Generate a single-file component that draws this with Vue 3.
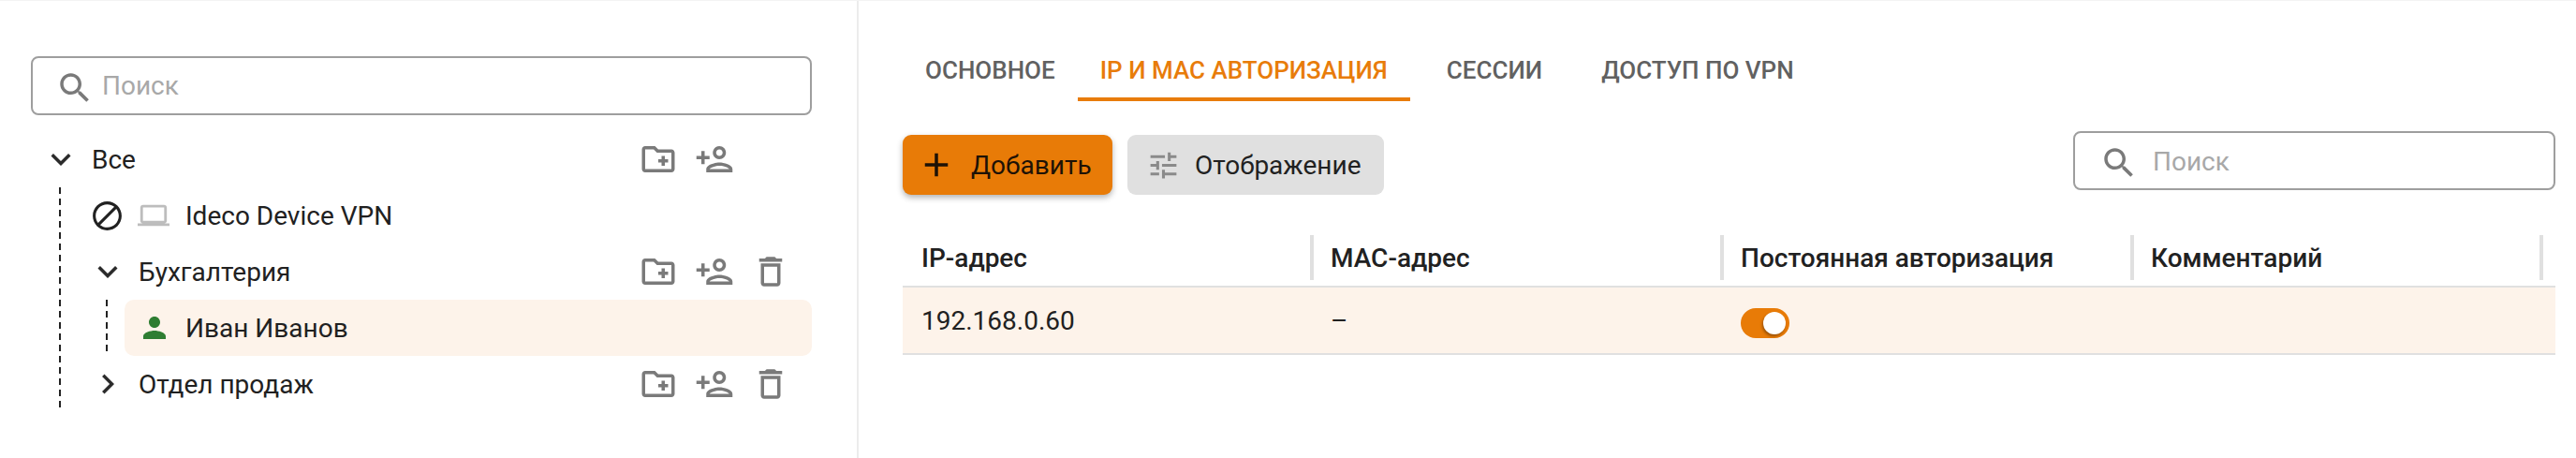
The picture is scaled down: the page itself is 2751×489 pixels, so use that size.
<script setup>
import { ref } from 'vue'

const icons = {
  search: 'M15.5 14h-.79l-.28-.27C15.41 12.59 16 11.11 16 9.5 16 5.91 13.09 3 9.5 3S3 5.91 3 9.5 5.91 16 9.5 16c1.61 0 3.09-.59 4.23-1.57l.27.28v.79l5 4.99L20.49 19l-4.99-5zm-6 0C7.01 14 5 11.99 5 9.5S7.01 5 9.5 5 14 7.01 14 9.5 11.99 14 9.5 14z',
  down: 'M16.59 8.59 12 13.17 7.41 8.59 6 10l6 6 6-6z',
  right: 'M10 6 8.59 7.41 13.17 12l-4.58 4.59L10 18l6-6z',
  folder: 'M20 6h-8l-2-2H4c-1.11 0-1.99.89-1.99 2L2 18c0 1.11.89 2 2 2h16c1.11 0 2-.89 2-2V8c0-1.11-.89-2-2-2zm0 12H4V6h5.17l2 2H20v10zm-8-4h2v2h2v-2h2v-2h-2v-2h-2v2h-2z',
  userAdd: 'M15 12c2.21 0 4-1.79 4-4s-1.79-4-4-4-4 1.79-4 4 1.79 4 4 4zm0-6c1.1 0 2 .9 2 2s-.9 2-2 2-2-.9-2-2 .9-2 2-2zm0 8c-2.67 0-8 1.34-8 4v2h16v-2c0-2.66-5.33-4-8-4zm-6 4c.22-.72 3.31-2 6-2 2.7 0 5.8 1.29 6 2H9zm-3-3v-3h3v-2H6V7H4v3H1v2h3v3z',
  trash: 'M16 9v10H8V9h8m-1.5-6h-5l-1 1H5v2h14V4h-3.5l-1-1zM18 7H6v12c0 1.1.9 2 2 2h8c1.1 0 2-.9 2-2V7z',
  block: 'M12 2C6.48 2 2 6.48 2 12s4.48 10 10 10 10-4.48 10-10S17.52 2 12 2zM4 12c0-4.42 3.58-8 8-8 1.85 0 3.55.63 4.9 1.69L5.69 16.9C4.63 15.55 4 13.85 4 12zm8 8c-1.85 0-3.55-.63-4.9-1.69L18.31 7.1C19.37 8.45 20 10.15 20 12c0 4.42-3.58 8-8 8z',
  laptop: 'M20 18c1.1 0 1.99-.9 1.99-2L22 6c0-1.1-.9-2-2-2H4c-1.1 0-2 .9-2 2v10c0 1.1.9 2 2 2H0v2h24v-2h-4zM4 6h16v10H4V6z',
  person: 'M12 12c2.21 0 4-1.79 4-4s-1.79-4-4-4-4 1.79-4 4 1.79 4 4 4zm0 2c-2.67 0-8 1.34-8 4v2h16v-2c0-2.66-5.33-4-8-4z',
  plus: 'M19 13h-6v6h-2v-6H5v-2h6V5h2v6h6v2z',
  tune: 'M3 17v2h6v-2H3zM3 5v2h10V5H3zm10 16v-2h8v-2h-8v-2h-2v6h2zM7 9v2H3v2h4v2h2V9H7zm14 4v-2H11v2h10zm-6-4h2V7h4V5h-4V3h-2v6z',
}

const tabs = [
  { label: 'Основное', cls: '' },
  { label: 'IP и MAC авторизация', cls: 'active' },
  { label: 'Сессии', cls: 'spaced' },
  { label: 'Доступ по VPN', cls: 'spaced' },
]

const columns = ['IP-адрес', 'MAC-адрес', 'Постоянная авторизация', 'Комментарий']
const permanent = ref(true)
</script>

<template>
  <div class="page">
    <aside class="sidebar">
      <label class="search">
        <svg class="ico search-ico" viewBox="0 0 24 24"><path :d="icons.search" /></svg>
        <span class="placeholder">Поиск</span>
      </label>

      <div class="tree">
        <div class="row">
          <svg class="ico chevron" viewBox="0 0 24 24"><path :d="icons.down" /></svg>
          <span>Все</span>
          <div class="actions">
            <svg class="ico" viewBox="0 0 24 24"><path :d="icons.folder" /></svg>
            <svg class="ico" viewBox="0 0 24 24"><path :d="icons.userAdd" /></svg>
            <span class="ico"></span>
          </div>
        </div>

        <div class="children outer">
          <div class="row level">
            <svg class="ico-block" viewBox="0 0 24 24"><path :d="icons.block" /></svg>
            <svg class="ico-laptop" viewBox="0 0 24 24"><path :d="icons.laptop" /></svg>
            <span>Ideco Device VPN</span>
          </div>

          <div class="row level">
            <svg class="ico chevron" viewBox="0 0 24 24"><path :d="icons.down" /></svg>
            <span>Бухгалтерия</span>
            <div class="actions">
              <svg class="ico" viewBox="0 0 24 24"><path :d="icons.folder" /></svg>
              <svg class="ico" viewBox="0 0 24 24"><path :d="icons.userAdd" /></svg>
              <svg class="ico" viewBox="0 0 24 24"><path :d="icons.trash" /></svg>
            </div>
          </div>

          <div class="children inner">
            <div class="row selected">
              <svg class="ico-person" viewBox="0 0 24 24"><path :d="icons.person" /></svg>
              <span>Иван Иванов</span>
            </div>
          </div>

          <div class="row level">
            <svg class="ico chevron" viewBox="0 0 24 24"><path :d="icons.right" /></svg>
            <span>Отдел продаж</span>
            <div class="actions">
              <svg class="ico" viewBox="0 0 24 24"><path :d="icons.folder" /></svg>
              <svg class="ico" viewBox="0 0 24 24"><path :d="icons.userAdd" /></svg>
              <svg class="ico" viewBox="0 0 24 24"><path :d="icons.trash" /></svg>
            </div>
          </div>
        </div>
      </div>
    </aside>

    <main class="content">
      <nav class="tabs">
        <div v-for="tab in tabs" :key="tab.label" class="tab" :class="tab.cls">{{ tab.label }}</div>
      </nav>

      <div class="toolbar">
        <button class="btn btn-add">
          <svg class="ico" viewBox="0 0 24 24"><path :d="icons.plus" /></svg>
          <span>Добавить</span>
        </button>
        <button class="btn btn-view">
          <svg class="ico-tune" viewBox="0 0 24 24"><path :d="icons.tune" /></svg>
          <span>Отображение</span>
        </button>
        <label class="search search-right">
          <svg class="ico search-ico" viewBox="0 0 24 24"><path :d="icons.search" /></svg>
          <span class="placeholder">Поиск</span>
        </label>
      </div>

      <div class="table">
        <div class="thead">
          <div v-for="col in columns" :key="col" class="th">{{ col }}</div>
        </div>
        <div class="tr">
          <div class="td">192.168.0.60</div>
          <div class="td">–</div>
          <div class="td">
            <div class="switch" :class="{ on: permanent }"><span class="thumb"></span></div>
          </div>
          <div class="td"></div>
        </div>
      </div>
    </main>
  </div>
</template>

<style scoped>
.page {
  display: flex;
  height: 489px;
  box-sizing: border-box;
  border-top: 1px solid #f3f3f3;
  font-family: Roboto, sans-serif;
  color: #212121;
  background: #fff;
}

.sidebar {
  width: 917px;
  flex: none;
  box-sizing: border-box;
  padding: 59px 48px 0 33px;
  border-right: 2px solid #ececec;
}

.search {
  display: flex;
  align-items: center;
  box-sizing: border-box;
  height: 63px;
  padding-left: 24px;
  border: 2px solid #9e9e9e;
  border-radius: 8px;
  font-size: 28px;
}

.search-ico {
  margin-top: 4px;
}

.placeholder {
  margin-left: 8px;
  color: #a8a8a8;
}

.ico {
  display: block;
  flex: none;
  width: 42px;
  height: 42px;
  fill: #7a7a7a;
}

.chevron {
  fill: #2b2b2b;
  margin-right: 12px;
}

.tree {
  margin-top: 17px;
  font-size: 28px;
}

.row {
  display: flex;
  align-items: center;
  height: 60px;
  padding-left: 11px;
}

.level {
  padding-left: 61px;
}

.actions {
  display: flex;
  gap: 18px;
  margin-left: auto;
  margin-right: 23px;
}

.children {
  background-repeat: no-repeat;
  background-size: 2px 100%;
  background-image: repeating-linear-gradient(to bottom, #222 0, #222 7px, transparent 7px, transparent 12px);
}

.outer {
  background-position: 30px 0;
}

.inner {
  background-position: 80px 0;
}

.ico-block {
  flex: none;
  width: 37px;
  height: 37px;
  margin-left: 2px;
  fill: #212121;
}

.ico-laptop {
  flex: none;
  width: 34px;
  height: 34px;
  margin: 0 17px 0 14px;
  fill: #bdbdbd;
}

.selected {
  margin-left: 100px;
  padding-left: 14px;
  border-radius: 10px;
  background: #fdf3ea;
}

.ico-person {
  flex: none;
  width: 36px;
  height: 36px;
  margin-right: 15px;
  fill: #2e7d32;
}

.content {
  flex: 1;
  min-width: 0;
  padding: 43px 22px 0 47px;
}

.tabs {
  display: flex;
}

.tab {
  box-sizing: border-box;
  height: 64px;
  padding: 2px 24px 0;
  display: flex;
  align-items: center;
  border-bottom: 4px solid transparent;
  font-size: 26px;
  font-weight: 500;
  text-transform: uppercase;
  color: #616161;
}

.tab.active {
  color: #e87c0a;
  border-bottom-color: #e87c0a;
}

.tab.spaced {
  margin-left: 15px;
}

.toolbar {
  display: flex;
  align-items: flex-start;
  margin-top: 32px;
}

.btn {
  display: flex;
  align-items: center;
  height: 64px;
  margin-top: 4px;
  border: none;
  border-radius: 9px;
  font-family: inherit;
  font-size: 28px;
  color: #212121;
}

.btn-add {
  width: 224px;
  padding: 0 0 0 15px;
  background: #e87b07;
  color: #1d1206;
  box-shadow: 0 3px 6px rgba(0, 0, 0, 0.3);
}

.btn-add .ico {
  fill: #1d1206;
  margin-right: 16px;
}

.btn-view {
  width: 274px;
  margin-left: 16px;
  padding: 0 0 0 20px;
  background: #e0e0e0;
}

.ico-tune {
  flex: none;
  width: 37px;
  height: 37px;
  margin-right: 15px;
  fill: #8a8a8a;
}

.search-right {
  width: 515px;
  margin-left: auto;
  padding-left: 26px;
}

.search-right .placeholder {
  margin: 2px 0 0 15px;
}

.table {
  margin-top: 37px;
  font-size: 28px;
}

.thead,
.tr {
  display: grid;
  grid-template-columns: 439px 438px 438px 437px 1fr;
}

.thead {
  align-items: center;
  height: 60px;
}

.th {
  display: flex;
  align-items: center;
  box-sizing: border-box;
  height: 48px;
  padding-left: 18px;
  border-right: 4px solid #e0e0e0;
  font-weight: 500;
}

.th:first-child,
.td:first-child {
  padding-left: 20px;
}

.tr {
  box-sizing: border-box;
  height: 74px;
  border-top: 2px solid #e0e0e0;
  border-bottom: 2px solid #e0e0e0;
  background: #fdf3ea;
}

.td {
  display: flex;
  align-items: center;
  padding-left: 18px;
}

.switch {
  display: flex;
  box-sizing: border-box;
  width: 52px;
  height: 32px;
  margin-top: 6px;
  padding: 4px;
  border-radius: 16px;
  background: #e87b07;
}

.switch.on {
  justify-content: flex-end;
}

.thumb {
  width: 24px;
  height: 24px;
  border-radius: 50%;
  background: #fff;
  box-shadow: -1px 2px 3px rgba(0, 0, 0, 0.35);
}
</style>

<style>
html,
body {
  margin: 0;
  background: #fff;
}
</style>
